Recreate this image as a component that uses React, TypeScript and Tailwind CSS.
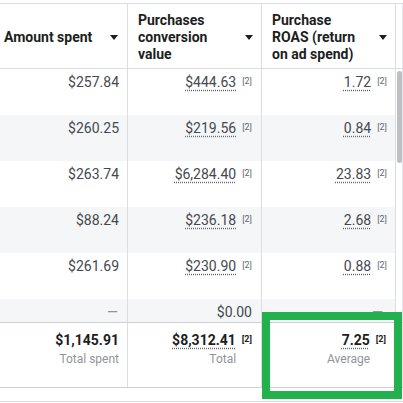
import React from 'react';

interface Row {
  spent: string;
  value: string;
  roas: string;
}

const rows: Row[] = [
  { spent: '$257.84', value: '$444.63', roas: '1.72' },
  { spent: '$260.25', value: '$219.56', roas: '0.84' },
  { spent: '$263.74', value: '$6,284.40', roas: '23.83' },
  { spent: '$88.24', value: '$236.18', roas: '2.68' },
  { spent: '$261.69', value: '$230.90', roas: '0.88' },
];

const grid = 'grid grid-cols-[128px_134px_134px]';

function Caret() {
  return (
    <span className="mt-[3px] h-0 w-0 shrink-0 border-x-[4px] border-t-[5px] border-x-transparent border-t-[#1c1e21]" />
  );
}

function Note({ bold = false, hidden = false }: { bold?: boolean; hidden?: boolean }) {
  return (
    <span
      className={`ml-[6px] mt-[4px] text-[9px] leading-[9px] ${bold ? 'font-bold text-[#1c1e21]' : 'text-[#606770]'} ${hidden ? 'invisible' : ''}`}
    >
      [2]
    </span>
  );
}

function Dotted({ children }: { children: React.ReactNode }) {
  return (
    <span className="underline decoration-dotted decoration-[#606770] underline-offset-[3px]">
      {children}
    </span>
  );
}

function HeaderCell({ label, first = false }: { label: string; first?: boolean }) {
  return (
    <div
      className={`flex items-center justify-between border-r border-[#dadde1] pr-[8px] ${first ? 'pl-[4px] pr-[9px]' : 'pl-[10px]'}`}
    >
      <div className={`pt-[2px] text-[14px] font-bold leading-[17px] text-[#1c1e21] ${first ? 'whitespace-nowrap' : 'w-[92px]'}`}>
        {label}
      </div>
      <Caret />
    </div>
  );
}

function FooterCell({ value, label, note = false }: { value: string; label: string; note?: boolean }) {
  return (
    <div className={`flex flex-col items-end border-r border-[#dadde1] pt-[8px] ${note ? 'pr-[9px]' : 'pr-[8px]'}`}>
      <div className="flex items-start leading-[18px] font-bold text-[#1c1e21]">
        {note ? <Dotted>{value}</Dotted> : value}
        {note && <Note bold />}
      </div>
      <div className="mt-[2px] flex items-start text-[12px] leading-[16px] text-[#90949c]">
        {label}
        {note && <Note hidden />}
      </div>
    </div>
  );
}

export default function App() {
  return (
    <div className="relative h-[403px] w-[403px] overflow-hidden bg-white pt-[3px] font-[Roboto,sans-serif] text-[14px]">
      {/* header */}
      <div className="flex h-[66px] border-y border-[#dadde1]">
        <div className={`${grid} w-[396px]`}>
          <HeaderCell label="Amount spent" first />
          <HeaderCell label="Purchases conversion value" />
          <HeaderCell label="Purchase ROAS (return on ad spend)" />
        </div>
        <div className="flex-1 border-r border-[#e4e6eb]" />
      </div>

      {/* body */}
      <div className="flex h-[253px] overflow-hidden">
        <div className="w-[396px]">
          {rows.map((r, i) => (
            <div key={i} className={`${grid} h-[46px] ${i % 2 === 1 ? 'bg-[#f5f6f7]' : 'bg-white'}`}>
              <div className="border-r border-[#dadde1] pr-[8px] pt-[4px] text-right leading-[18px] text-[#444950]">
                {r.spent}
              </div>
              <div className="flex items-start justify-end border-r border-[#dadde1] pr-[9px] pt-[4px] leading-[18px] text-[#444950]">
                <Dotted>{r.value}</Dotted>
                <Note />
              </div>
              <div className="flex items-start justify-end border-r border-[#dadde1] pr-[8px] pt-[4px] leading-[18px] text-[#444950]">
                <Dotted>{r.roas}</Dotted>
                <Note />
              </div>
            </div>
          ))}
          <div className={`${grid} h-[23px] bg-[#f5f6f7]`}>
            <div className="border-r border-[#dadde1] pr-[9px] pt-[4px] text-right leading-[18px] text-[#8d949e]">—</div>
            <div className="border-r border-[#dadde1] pr-[9px] pt-[4px] text-right leading-[18px] text-[#444950]">$0.00</div>
            <div className="border-r border-[#dadde1] pr-[12px] pt-[4px] text-right leading-[18px] text-[#8d949e]">—</div>
          </div>
        </div>
        <div className="flex-1 border-r border-[#e4e6eb] pl-[1px] pt-[2px]">
          <div className="h-[92px] w-[5px] rounded-full bg-[#bcc0c4]" />
        </div>
      </div>

      {/* footer */}
      <div className="flex h-[66px] border-y border-[#ccd0d5]">
        <div className={`${grid} w-[396px]`}>
          <FooterCell value="$1,145.91" label="Total spent" />
          <FooterCell value="$8,312.41" label="Total" note />
          <FooterCell value="7.25" label="Average" note />
        </div>
        <div className="flex-1 border-r border-[#e4e6eb]" />
      </div>

      <div className="h-[13px]" />
      <div className="h-px bg-[#dadde1]" />

      {/* annotation box */}
      <div className="absolute left-[262px] top-[312px] h-[87px] w-[140px] border-[8px] border-[#22b14c]" />
    </div>
  );
}
